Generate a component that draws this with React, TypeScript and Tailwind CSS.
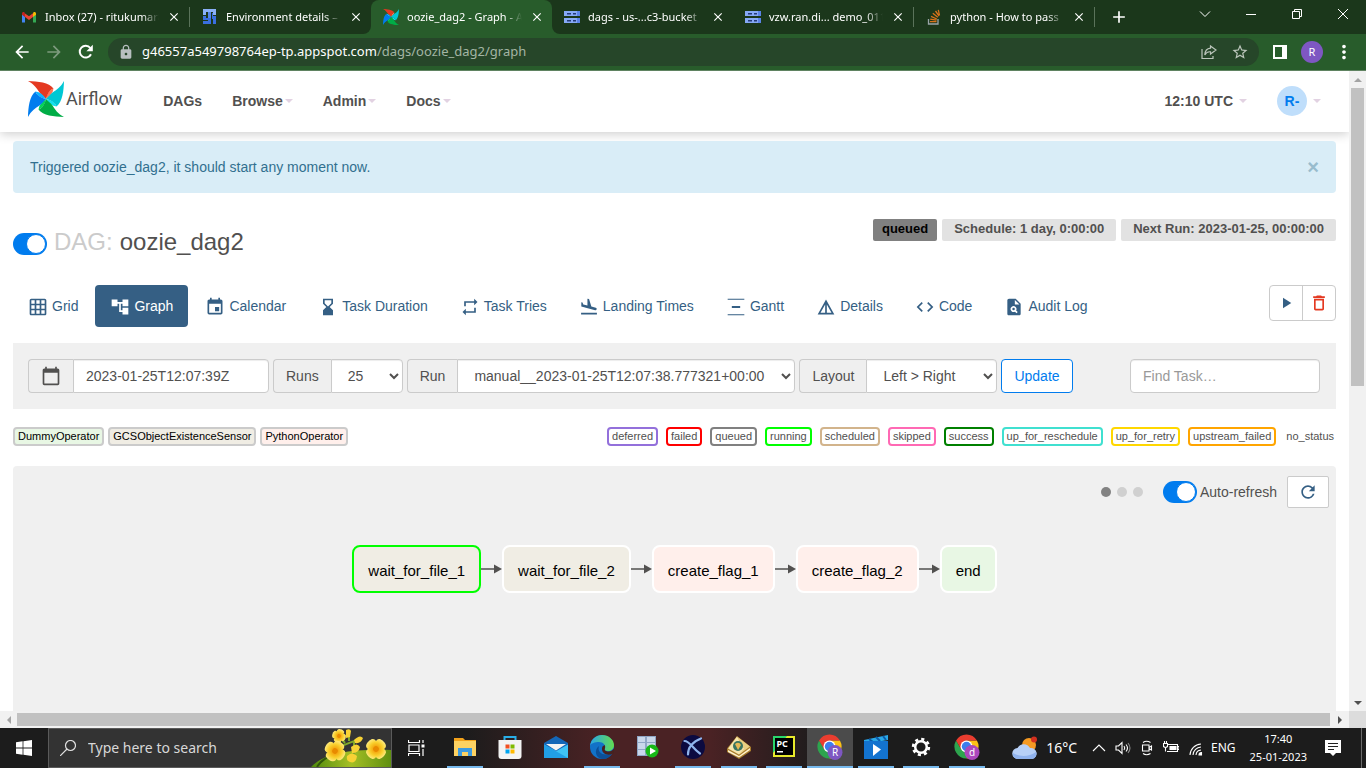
import React from "react";
import {
  MdGridOn, MdAccountTree, MdEvent, MdRepeat, MdFlightLand, MdCode, MdPlagiarism,
  MdPlayArrow, MdDeleteOutline, MdRefresh, MdCalendarToday, MdArrowBack, MdArrowForward,
  MdLock, MdStarBorder, MdMoreVert, MdClose, MdAdd,
} from "react-icons/md";

type Kids = { children?: React.ReactNode };

/* ---------- shared drawings ---------- */

function Pinwheel({ className }: { className: string }) {
  const blades = [
    ["#e43921", "#ff7557", 0],
    ["#00c7d4", "#11e1ee", 90],
    ["#00ad46", "#04d659", 180],
    ["#017cee", "#0cb6ff", 270],
  ] as const;
  return (
    <svg viewBox="0 0 36 36" className={className} aria-hidden="true">
      {blades.map(([dark, light, angle]) => (
        <g key={angle} transform={`rotate(${angle} 18 18)`}>
          <path d="M18 18C19 13 21 9 25.500 7.500C25 12 22.500 15 18 18Z" fill={light} />
          <path d="M0 0C10 .3 21 1.500 25.500 7.500C22 8.500 19.500 12.500 18 18C15 15 13.500 14 11.500 11.500C9 7.500 6 3 0 0Z" fill={dark} />
        </g>
      ))}
    </svg>
  );
}

function GmailIcon() {
  return (
    <svg viewBox="0 0 16 16" className="size-4 shrink-0" aria-hidden="true">
      <path d="M1 5v8.500h3V7.500z" fill="#4285f4" />
      <path d="M15 5v8.500h-3V7.500z" fill="#34a853" />
      <path d="M12 4.500V8l3-2.300V4.500c0-1.500-1.500-2-2.500-1.300z" fill="#fbbc04" />
      <path d="M4 4.500V8l4 3 4-3V4.300L8 7.300z" fill="#ea4335" />
      <path d="M1 4.500v1.200L4 8V4.500L3.400 3.200C2.300 2.500 1 3.100 1 4.500z" fill="#c5221f" />
    </svg>
  );
}

function ComposerIcon() {
  return (
    <svg viewBox="0 0 16 16" className="size-4 shrink-0" aria-hidden="true">
      <path d="M1 0h13v6h-3V3H9v5H6V3H4v3H1z" fill="#8ab0f8" />
      <path d="M1 7h3v2h5v6H1v-3h5v-1H1zM10 4h1v3h3v8h-3v-5h-1z" fill="#3a6fe0" />
      <path d="M6 3h3v6H6z" fill="#5585ea" />
    </svg>
  );
}

function BucketIcon() {
  return (
    <svg viewBox="0 0 16 16" className="size-4 shrink-0" aria-hidden="true">
      <path d="M0 2h16v5H0zM0 9h16v5H0z" fill="#86a9f5" />
      <path d="M13 2h3v5h-3zM13 9h3v5h-3z" fill="#5b84e8" />
      <path d="M3 4h4v1.500H3zM9 4h3v1.500H9zM3 11h4v1.500H3zM9 11h3v1.500H9z" fill="#233a78" />
    </svg>
  );
}

function StackIcon() {
  return (
    <svg viewBox="0 0 16 16" className="size-4 shrink-0" fill="none" aria-hidden="true">
      <path d="M2.500 10v5h9.500v-5" stroke="#9aa5a8" strokeWidth="1.300" />
      <path d="M4 12.700h6.500M4.200 10.200l6.300 1M5 7.300l5.800 2.700M6.800 4.300l5 4M9.500 2l3.600 5M12.300.8l1.200 5.500" stroke="#d9731b" strokeWidth="1.300" />
    </svg>
  );
}

function ReloadArrow() {
  return (
    <svg viewBox="0 0 16 16" className="size-4" aria-hidden="true">
      <path d="M13 10.200A5.900 5.900 0 1 1 12.300 4" fill="none" stroke="#fff" strokeWidth="2" />
      <path d="M14.800.8v6.400H8.400z" fill="#fff" />
    </svg>
  );
}

function Caret() {
  return <span className="h-0 w-0 border-x-4 border-t-4 border-x-transparent border-t-[#e2d2e2]" />;
}

/* ---------- browser window ---------- */

const browserTabs = [
  { title: "Inbox (27) - ritukumar8", icon: <GmailIcon /> },
  { title: "Environment details – C", icon: <ComposerIcon /> },
  { title: "oozie_dag2 - Graph - A", icon: <Pinwheel className="size-4 shrink-0" />, active: true },
  { title: "dags - us-...c3-bucket", icon: <BucketIcon /> },
  { title: "vzw.ran.di... demo_011", icon: <BucketIcon /> },
  { title: "python - How to pass", icon: <StackIcon /> },
];

function TabStrip() {
  return (
    <div className="flex h-[34px] bg-[#285c2b]">
      <div className="w-[9px] bg-[#1b371b]" />
      {browserTabs.map((tab, i) => {
        const corner = i === 1 ? "rounded-br-lg" : i === 3 ? "rounded-bl-lg" : "";
        const line = i === 0 || i === 4 || i === 5;
        return (
          <div key={tab.title} className={`min-w-0 max-w-[181px] flex-1 bg-[#1b371b] ${corner}`}>
            <div className={`flex h-full items-center ${tab.active ? "rounded-t-lg bg-[#285c2b]" : ""}`}>
              <div className="flex min-w-0 flex-1 items-center gap-2 pr-2 pl-3">
                {tab.icon}
                <span className="min-w-0 flex-1 overflow-hidden text-[11px] whitespace-nowrap text-white [mask-image:linear-gradient(to_right,black_85%,transparent)]">
                  {tab.title}
                </span>
                <button aria-label={`Close ${tab.title}`} className="text-white">
                  <MdClose className="size-3.5" />
                </button>
              </div>
              {line && <div className="h-5 w-px bg-[#5a735a]" />}
            </div>
          </div>
        );
      })}
      <div className="flex flex-1 items-center justify-between bg-[#1b371b]">
        <button aria-label="New tab" className="ml-3.5 text-white"><MdAdd className="size-5" /></button>
        <div className="flex pb-1.5">
          <WinButton label="Search tabs"><path d="M1 3.500l5 5 5-5" /></WinButton>
          <WinButton label="Minimize"><path d="M1 6.500h10" /></WinButton>
          <WinButton label="Restore"><path d="M1.500 3.500h7v7h-7zM3.500 3.500v-2h7v7h-2" /></WinButton>
          <WinButton label="Close window"><path d="M1 1l10 10M11 1L1 11" /></WinButton>
        </div>
      </div>
    </div>
  );
}

function WinButton({ label, children }: Kids & { label: string }) {
  return (
    <button aria-label={label} className="flex h-7 w-[46px] items-center justify-center">
      <svg viewBox="0 0 12 12" className="size-3" fill="none" stroke="#fff" strokeWidth="1">{children}</svg>
    </button>
  );
}

function Toolbar() {
  return (
    <div className="flex items-center border-b border-[#5f8361] bg-[#285c2b] py-1 pr-[11px] pl-3">
      <button aria-label="Back" className="mr-3 text-white"><MdArrowBack className="size-5" /></button>
      <button aria-label="Forward" className="mr-3.5 text-[#7d9a7e]"><MdArrowForward className="size-5" /></button>
      <button aria-label="Reload" className="mr-3.5"><ReloadArrow /></button>
      <div className="flex h-7 flex-1 items-center rounded-full bg-[#264629] pr-2.5 pl-2.5 text-[13px]">
        <MdLock className="mr-2 size-4 text-[#b8bfc0]" />
        <span className="text-white">g46557a549798764ep-tp.appspot.com</span>
        <span className="flex-1 text-[#a3b5a4]">/dags/oozie_dag2/graph</span>
        <button aria-label="Share" className="mr-3.5">
          <svg viewBox="0 0 16 16" className="size-4" fill="none" stroke="#bcc6bc" strokeWidth="1.200">
            <path d="M1 5v9.500h11V12M9.500 2l5.500 4-5.500 4V7.800C6.500 7.500 5 8.500 3.800 11 4 7 6 4.500 9.500 4.200z" />
          </svg>
        </button>
        <button aria-label="Bookmark" className="text-[#bcc6bc]"><MdStarBorder className="size-[18px]" /></button>
      </div>
      <button aria-label="Side panel" className="ml-3.5">
        <svg viewBox="0 0 14 14" className="size-3.5"><path fillRule="evenodd" d="M0 0h14v14H0zM2 2v10h7V2z" fill="#fff" /></svg>
      </button>
      <button aria-label="Profile" className="mr-2.5 ml-3.5 flex size-[22px] items-center justify-center rounded-full bg-[#7e57c2] text-[11px] text-white">R</button>
      <button aria-label="Menu" className="text-white"><MdMoreVert className="size-[22px]" /></button>
    </div>
  );
}

/* ---------- Airflow page ---------- */

function NavBar() {
  return (
    <nav className="flex h-[61px] shrink-0 items-center pr-7 pb-0.5 pl-7 text-sm font-bold text-[#51504f] shadow-[0_2px_10px_rgba(0,0,0,0.2)]">
      <a href="#home" className="mr-[26px] flex items-center gap-0.5 pb-1">
        <Pinwheel className="size-9" />
        <span className="font-[Roboto,sans-serif] text-[18px] font-normal">Airflow</span>
      </a>
      <a href="#dags" className="px-[15px]">DAGs</a>
      {["Browse", "Admin", "Docs"].map((item) => (
        <a key={item} href={`#${item}`} className="flex items-center gap-0.5 px-[15px]">{item}<Caret /></a>
      ))}
      <div className="flex-1" />
      <button className="mr-[30px] flex items-center gap-1.5 font-bold">12:10 UTC<Caret /></button>
      <button className="flex items-center gap-1.5 font-bold">
        <span className="flex size-[30px] items-center justify-center rounded-full bg-[#bfdefb] text-[#017cee]">R-</span>
        <Caret />
      </button>
    </nav>
  );
}

function Toggle({ id, label }: { id: string; label?: string }) {
  return (
    <input
      id={id}
      type="checkbox"
      defaultChecked
      aria-label={label}
      className="flex h-[22px] w-[34px] appearance-none items-center justify-end rounded-full bg-[#017cee] pr-px before:block before:size-5 before:rounded-full before:border before:border-[#017cee] before:bg-white"
    />
  );
}

function DagHeading() {
  return (
    <div className="mt-[26px] flex items-start justify-between">
      <div className="flex items-center gap-[7px] pt-[9px]">
        <div className="pt-1"><Toggle id="dag-paused" label="Pause or unpause DAG" /></div>
        <h3 className="flex gap-[7px] text-2xl leading-7 text-[#51504f]"><span className="text-[#cbcbcb]">DAG:</span><span>oozie_dag2</span></h3>
      </div>
      <div className="flex gap-[5px] text-[13px] leading-5 font-bold text-[#51504f]">
        <span className="rounded-xs bg-[#808080] px-[9px] pb-0.5 text-black">queued</span>
        <span className="rounded-xs bg-[#e2e2e2] px-3 pb-0.5">Schedule: 1 day, 0:00:00</span>
        <span className="rounded-xs bg-[#e2e2e2] px-3 pb-0.5">Next Run: 2023-01-25, 00:00:00</span>
      </div>
    </div>
  );
}

function Glyph({ d }: { d: string }) {
  return <svg viewBox="0 0 24 24" className="size-5" fill="currentColor" aria-hidden="true"><path d={d} /></svg>;
}

const views = [
  { name: "Grid", icon: <MdGridOn className="size-5" /> },
  { name: "Graph", icon: <MdAccountTree className="size-5" />, active: true },
  { name: "Calendar", icon: <MdEvent className="size-5" /> },
  { name: "Task Duration", icon: <Glyph d="M18 22l-.01-6L14 12l3.990-4.010L18 2H6v6l4 4-4 3.990V22h12zM8 7.500V4h8v3.500l-4 4-4-4z" /> },
  { name: "Task Tries", icon: <MdRepeat className="size-5" /> },
  { name: "Landing Times", icon: <MdFlightLand className="size-5" /> },
  { name: "Gantt", icon: <Glyph d="M22 2v1.400H2V2zM7 10.800v2.400h10v-2.400zM2 20.600v1.400h20v-1.400z" /> },
  { name: "Details", icon: <Glyph d="M12 3L2 21h20L12 3zm1 5.920L18.600 19H13V8.920zm-2 0V19H5.400L11 8.920z" /> },
  { name: "Code", icon: <MdCode className="size-5" /> },
  { name: "Audit Log", icon: <MdPlagiarism className="size-5" /> },
];

function ViewTabs() {
  return (
    <div className="mt-[29px] flex items-start justify-between">
      <div className="flex gap-0.5 text-sm text-[#355f84]">
        {views.map((v) => (
          <a
            key={v.name}
            href={`#${v.name}`}
            className={`flex h-[42px] items-center gap-1 rounded-sm px-[15px] pb-px ${v.active ? "bg-[#355f84] text-white" : ""}`}
          >
            <span className="pt-0.5">{v.icon}</span>
            {v.name}
          </a>
        ))}
      </div>
      <div className="flex h-9 divide-x divide-[#cbcbcb] rounded-sm border border-[#cbcbcb]">
        <button aria-label="Trigger DAG" className="px-[7px] text-[#355f84]"><MdPlayArrow className="size-[18px]" /></button>
        <button aria-label="Delete DAG" className="px-[6px] text-[#e43921]"><MdDeleteOutline className="size-5" /></button>
      </div>
    </div>
  );
}

function Addon({ htmlFor, children }: Kids & { htmlFor: string }) {
  return (
    <label htmlFor={htmlFor} className="flex items-center rounded-l-sm border border-r-0 border-[#cbcbcb] bg-[#efefef] px-3">
      {children}
    </label>
  );
}

const field = "h-[34px] border border-[#cbcbcb] bg-white px-3 text-sm text-[#51504f] shadow-[inset_0_1px_1px_rgba(0,0,0,0.075)]";

function FilterBar() {
  return (
    <form className="mt-4 flex items-center justify-between bg-[#f0f0f0] py-4 pr-4 pl-[15px] text-sm text-[#51504f]" onSubmit={(e) => e.preventDefault()}>
      <div className="flex gap-1">
        <div className="flex">
          <Addon htmlFor="base-date"><MdCalendarToday className="size-5" aria-label="Base date" /></Addon>
          <input id="base-date" defaultValue="2023-01-25T12:07:39Z" className={`${field} w-[196px] rounded-r-sm`} />
        </div>
        <div className="flex">
          <Addon htmlFor="runs">Runs</Addon>
          <select id="runs" className={`${field} w-[72px] rounded-r-sm`}><option>25</option></select>
        </div>
        <div className="flex">
          <Addon htmlFor="run">Run</Addon>
          <select id="run" className={`${field} w-[338px] rounded-r-sm`}><option>manual__2023-01-25T12:07:38.777321+00:00</option></select>
        </div>
        <div className="flex">
          <Addon htmlFor="layout">Layout</Addon>
          <select id="layout" className={`${field} w-[131px] rounded-r-sm`}><option>Left &gt; Right</option></select>
        </div>
        <button className="rounded-sm border border-[#017cee] bg-white px-3 text-[#017cee]">Update</button>
      </div>
      <input aria-label="Find task" placeholder="Find Task…" className={`${field} w-[190px] rounded-sm placeholder:text-[#999]`} />
    </form>
  );
}

const operators = [
  ["DummyOperator", "bg-[#e8f7e4]"],
  ["GCSObjectExistenceSensor", "bg-[#f0ede4]"],
  ["PythonOperator", "bg-[#ffefeb]"],
];

const states = [
  ["deferred", "border-2 border-[#9370db] px-[3px]"],
  ["failed", "border-2 border-[#ff0000] px-[3px]"],
  ["queued", "border-2 border-[#808080] px-[3px]"],
  ["running", "border-2 border-[#00ff00] px-[3px]"],
  ["scheduled", "border-2 border-[#d2b48c] px-[3px]"],
  ["skipped", "border-2 border-[#ff69b4] px-[3px]"],
  ["success", "border-2 border-[#008000] px-[3px]"],
  ["up_for_reschedule", "border-2 border-[#40e0d0] px-[3px]"],
  ["up_for_retry", "border-2 border-[#ffd700] px-[3px]"],
  ["upstream_failed", "border-2 border-[#ffa500] px-[3px]"],
  ["no_status", "px-0.5 py-0.5"],
];

function Legend() {
  return (
    <div className="mt-[18px] flex justify-between text-[11px] leading-[15px]">
      <div className="flex gap-1 text-black">
        {operators.map(([name, tone]) => (
          <span key={name} className={`rounded-sm border-2 border-[#cbcbcb] px-[3px] ${tone}`}>{name}</span>
        ))}
      </div>
      <div className="flex gap-2 text-[#51504f]">
        {states.map(([name, tone]) => (
          <span key={name} className={`rounded-sm ${tone}`}>{name}</span>
        ))}
      </div>
    </div>
  );
}

const nodes = [
  ["wait_for_file_1", "border-[#00ff00] bg-[#f0ede4]"],
  ["wait_for_file_2", "border-white bg-[#f0ede4]"],
  ["create_flag_1", "border-white bg-[#ffefeb]"],
  ["create_flag_2", "border-white bg-[#ffefeb]"],
  ["end", "border-white bg-[#e8f7e4]"],
];

function GraphPanel() {
  return (
    <section className="mt-5 flex-1 rounded-t-sm bg-[#f0f0f0] text-[#51504f]">
      <div className="flex items-center justify-end pt-2.5 pr-[7px] text-sm">
        <div className="mr-5 flex gap-1.5">
          <i className="size-2.5 rounded-full bg-[#828282]" />
          <i className="size-2.5 rounded-full bg-[#d0d0d0]" />
          <i className="size-2.5 rounded-full bg-[#d0d0d0]" />
        </div>
        <Toggle id="auto-refresh" />
        <label htmlFor="auto-refresh" className="mr-2.5 ml-[3px]">Auto-refresh</label>
        <button aria-label="Refresh" className="flex h-8 w-[42px] items-center justify-center rounded-xs border border-[#cbcbcb] bg-white text-[#355f84]">
          <MdRefresh className="size-5" />
        </button>
      </div>
      <div className="mt-[37px] flex items-center justify-center">
        {nodes.map(([name, tone], i) => (
          <React.Fragment key={name}>
            {i > 0 && (
              <svg viewBox="0 0 21 10" className="h-2.5 w-[21px]" aria-hidden="true">
                <path d="M0 5h15" stroke="#51504f" strokeWidth="1.500" />
                <path d="M13 .5L21 5l-8 4.500z" fill="#51504f" />
              </svg>
            )}
            <div className={`flex h-12 items-center rounded-lg border-2 px-3.5 pt-1 text-[15px] text-black ${tone}`}>{name}</div>
          </React.Fragment>
        ))}
      </div>
    </section>
  );
}

function VerticalScrollbar() {
  return (
    <div className="flex w-[17px] flex-col items-center bg-[#f1f1f1]" aria-hidden="true">
      <div className="flex h-[17px] items-center"><i className="border-x-4 border-b-4 border-x-transparent border-b-[#a3a3a3]" /></div>
      <div className="w-[13px] flex-[298] bg-[#c1c1c1]" />
      <div className="flex-[308]" />
      <div className="flex h-[17px] items-center"><i className="border-x-4 border-t-4 border-x-transparent border-t-[#505050]" /></div>
    </div>
  );
}

function HorizontalScrollbar() {
  return (
    <div className="flex h-[17px] items-center bg-[#f1f1f1]" aria-hidden="true">
      <div className="flex w-[17px] justify-center"><i className="border-y-4 border-r-4 border-y-transparent border-r-[#a3a3a3]" /></div>
      <div className="h-[13px] flex-1 bg-[#c1c1c1]" />
      <div className="flex w-[19px] justify-center"><i className="border-y-4 border-l-4 border-y-transparent border-l-[#505050]" /></div>
      <div className="h-full w-[17px] bg-[#dcdcdc]" />
    </div>
  );
}

/* ---------- Windows taskbar ---------- */

function Bloom({ x, y, r, turn }: { x: number; y: number; r: number; turn: number }) {
  return (
    <g transform={`translate(${x} ${y}) rotate(${turn}) scale(${r})`}>
      {[0, 90, 180, 270].map((a) => (
        <path key={a} d="M0 .1C-.5-.2-.75-.7-.45-.95C-.2-1.1.2-1.1.45-.95C.75-.7.5-.2 0 .1Z" transform={`rotate(${a})`} fill="url(#petal)" />
      ))}
      <circle r=".28" fill="#e88a00" />
    </g>
  );
}

function Flowers() {
  return (
    <svg viewBox="0 0 80 38" className="h-[38px] w-20" aria-hidden="true">
      <defs>
        <linearGradient id="leaf" x1="0" x2="1"><stop stopColor="#4f8a0c" /><stop offset=".5" stopColor="#a5bf25" /><stop offset="1" stopColor="#5f8f10" /></linearGradient>
        <radialGradient id="petal" gradientUnits="userSpaceOnUse" cx="0" cy="0" r="1.100"><stop offset=".2" stopColor="#f3a10c" /><stop offset=".6" stopColor="#f9cf2c" /><stop offset="1" stopColor="#ffec85" /></radialGradient>
      </defs>
      <path d="M0 38C14 24 38 20 80 21V38z" fill="url(#leaf)" />
      <path d="M6 38C11 30 17 28 22 26" stroke="#31560a" strokeWidth="2" fill="none" />
      <path d="M27 19C35 14 44 13 49 9M38 12V7M43 13v13M34 14l-5-6" stroke="#7fa82a" strokeWidth="2" fill="none" />
      <path d="M35 1q4-2 5 1l-1 6-4 1zM43 11q6-6 9-2-2 6-8 5zM40 18q6-5 9 0-1 6-8 6zM36 27q5-5 10 0-1 8-7 6-4-1-3-6z" fill="#f7d235" />
      <Bloom x={28} y={7} r={6.5} turn={20} />
      <Bloom x={24} y={22} r={10} turn={35} />
      <Bloom x={65} y={20} r={10} turn={45} />
    </svg>
  );
}

function App24({ children }: Kids) {
  return <svg viewBox="0 0 24 24" className="size-6" aria-hidden="true">{children}</svg>;
}

function Chrome({ letter, tone }: { letter: string; tone: string }) {
  return (
    <svg viewBox="0 0 26 26" className="size-[26px]" aria-hidden="true">
      <path d="M12.500 12.500V6.500H22.900A12 12 0 0 1 12.500 24.500z" fill="#fbc116" />
      <path d="M12.500 12.500L7.300 15.500 2.100 6.500A12 12 0 0 0 12.500 24.500L17 15.500z" fill="#2da44e" />
      <path d="M2.100 6.500A12 12 0 0 1 22.900 6.500H12.500L7.300 15.500z" fill="#ea3d2f" />
      <circle cx="12.500" cy="12.500" r="6" fill="#fff" />
      <circle cx="12.500" cy="12.500" r="4.700" fill="#3b7ded" />
      <circle cx="18" cy="18.500" r="7.500" fill={tone} />
      <text x="18" y="22" textAnchor="middle" fontSize="10" fill="#fff">{letter}</text>
    </svg>
  );
}

const apps: { name: string; open?: boolean; active?: boolean; icon: React.ReactNode }[] = [
  { name: "File Explorer", open: true, icon: (
    <App24><path d="M1 3h9l2 2h11v16H1z" fill="#f2a21b" /><path d="M1 6h22v15H1z" fill="#fdd262" /><path d="M5 21v-8h14v8h-4v-4H9v4z" fill="#3d9be0" /></App24>
  ) },
  { name: "Microsoft Store", icon: (
    <App24><path d="M6.500 6V2h11v4" fill="none" stroke="#29aee8" strokeWidth="2" /><path d="M.5 5h23v16q0 3-3 3H3.500q-3 0-3-3z" fill="#f3f3f3" /><path d="M7.500 9.500h4v4h-4z" fill="#f25022" /><path d="M12.500 9.500h4v4h-4z" fill="#7fba00" /><path d="M7.500 14.500h4v4h-4z" fill="#00a4ef" /><path d="M12.500 14.500h4v4h-4z" fill="#ffb900" /></App24>
  ) },
  { name: "Mail", icon: (
    <App24><path d="M0 8L12 1l12 7v14H0z" fill="#1467b8" /><path d="M0 9.500l12 6.500-12 7z" fill="#35b2ee" /><path d="M24 9.500V23H0z" fill="#3fc3f5" /><path d="M0 9.500L24 23H0z" fill="#219fe6" /><path d="M2 9h20l-10 6.500z" fill="#f4f4f4" /></App24>
  ) },
  { name: "Edge", open: true, icon: (
    <App24>
      <defs><linearGradient id="edge" x1="0" x2="1"><stop stopColor="#2aa6e8" /><stop offset="1" stopColor="#62dc50" /></linearGradient></defs>
      <circle cx="12" cy="12" r="12" fill="#1272c8" />
      <path d="M0 11C1 4 6 0 12 0c7 0 12 5 12 10 0 4-3 6-6 6-3 0-4-1-3-3 1-3-2-6-6-6C5 7 1 8 0 11z" fill="url(#edge)" />
      <path d="M9 11c-2 6 3 10 11 8 2-.5 2 .5 1 1.500-3 3-6 3.500-9 3.500C5 23 4 14 9 11z" fill="#0c4f98" />
      <path d="M14.500 10c2 3-1.500 4.500 1.500 6 3 1.200 6 .5 8-2.500l.5 4.500-4 1.500c-6 1-10-3-8-8z" fill="#47211f" />
    </App24>
  ) },
  { name: "Database Runner", icon: (
    <App24><path d="M2 1h19v20H2z" fill="#8fa6c5" /><path d="M3 2h7v5H3zM12 2h8v5h-8zM3 8h7v6H3zM12 8h8v6h-8zM3 15h7v5H3z" fill="#c9d7ea" /><circle cx="17" cy="16" r="6.500" fill="#17b817" /><path d="M15 12.500l6 3.500-6 3.500z" fill="#fff" /></App24>
  ) },
  { name: "X Client", open: true, icon: (
    <App24><circle cx="12" cy="12" r="12" fill="#0b0a40" /><path d="M3.500 6C9 6 11 13 19 18.500M20 3.500C11 7 7 12 7 19.500" fill="none" stroke="#8fb4ec" strokeWidth="2.200" strokeLinecap="round" /></App24>
  ) },
  { name: "SQL Viewer", open: true, icon: (
    <App24><path d="M0 13.500L10 1l14 11v4l-12 8L0 17z" fill="#a87d2c" /><path d="M1 13.500L10 1.500l8 13-6 5z" fill="#f7e6ae" /><path d="M10 1.500l13 10-11 8 5-6z" fill="#e9cf83" /><path d="M1 15l11 6 11-8v2l-11 7.500L1 17z" fill="#fff2ce" /><circle cx="11" cy="11" r="5" fill="#3a7560" /><path d="M8 9q4-3 6 1l-3 5z" fill="#e6b955" /></App24>
  ) },
  { name: "PyCharm", open: true, icon: (
    <App24><path d="M1 1h22v21H1z" fill="#e8ea2b" /><path d="M1 1h14L1 18z" fill="#29d66c" /><path d="M3 3h18v17H3z" fill="#000" /><text x="4.500" y="12" fontSize="9" fontWeight="bold" fill="#fff">PC</text><path d="M5 16h6v1.500H5z" fill="#fff" /></App24>
  ) },
  { name: "Chrome R", open: true, active: true, icon: <Chrome letter="R" tone="#7e57c2" /> },
  { name: "Movies & TV", open: true, icon: (
    <App24><path d="M0 5L24 0v5L0 9z" fill="#2ba8e6" /><path d="M5 4l4 3M12 2l4 4M19 1l3 4" stroke="#0c5ca8" strokeWidth="2" /><path d="M0 6h24v18H0z" fill="#1373cf" /><path d="M9 9l8 5.500L9 21z" fill="#fff" /></App24>
  ) },
  { name: "Settings", open: true, icon: (
    <App24><circle cx="12" cy="12" r="5.800" fill="none" stroke="#fff" strokeWidth="2.500" /><circle cx="12" cy="12" r="7.800" fill="none" stroke="#fff" strokeWidth="2.800" strokeDasharray="3.060 3.060" /></App24>
  ) },
  { name: "Chrome d", open: true, icon: <Chrome letter="d" tone="#ab47bc" /> },
];

function Tray({ children }: Kids) {
  return <svg viewBox="0 0 16 16" className="size-4" fill="none" stroke="#fff" strokeWidth="1.100" aria-hidden="true">{children}</svg>;
}

function Taskbar() {
  return (
    <footer className="flex h-10 shrink-0 items-stretch bg-[linear-gradient(to_right,#1c1c1c_34%,#4a2224_44%,#4a2224_52%,#1c1c1c_60%)] text-white">
      <button aria-label="Start" className="flex w-12 items-center justify-center">
        <svg viewBox="0 0 16 16" className="size-4" fill="#fff"><path d="M0 2.200L6.600 1.300v6.300H0zM7.400 1.200L16 0v7.600H7.400zM0 8.400h6.600v6.300L0 13.800zM7.400 8.400H16V16l-8.600-1.200z" /></svg>
      </button>
      <div className="flex w-[344px] items-center border border-[#5a5a5a] bg-[#333]">
        <svg viewBox="0 0 16 16" className="mr-3 ml-[11px] size-4" fill="none" stroke="#e0e0e0" strokeWidth="1.200" aria-hidden="true"><circle cx="10.500" cy="5.500" r="5" /><path d="M7 9L0 16" /></svg>
        <input aria-label="Search" placeholder="Type here to search" className="min-w-0 flex-1 bg-transparent text-sm placeholder:text-[#d8d8d8]" />
        <Flowers />
      </div>
      <button aria-label="Task view" className="mr-0.5 flex w-12 items-center justify-center">
        <svg viewBox="0 0 17 16" className="h-4 w-[17px]" fill="none" stroke="#fff" strokeWidth="1.200"><path d="M1 5h10v6.500H1zM.5 0v2.500h11V0M.5 16v-2.500h11V16M15 0v3M15 9v7" /><path d="M13.500 4.500h3v3h-3z" fill="#fff" stroke="none" /></svg>
      </button>
      <div className="grid w-[548px] grid-cols-12">
        {apps.map((app) => (
          <button key={app.name} aria-label={app.name} className={`flex flex-col items-center ${app.active ? "bg-[#4b4b4b]" : ""}`}>
            <span className="flex flex-1 items-center">{app.icon}</span>
            <span className={`h-0.5 ${app.open ? "bg-[#76b9ed]" : ""} ${app.active ? "w-full" : "w-9"}`} />
          </button>
        ))}
      </div>
      <div className="ml-auto flex items-center text-xs">
        <button className="mr-3.5 flex items-center gap-2 text-sm">
          <svg viewBox="0 0 26 24" className="h-6 w-[26px]" aria-hidden="true">
            <circle cx="17" cy="9" r="7" fill="#f59a23" /><circle cx="22" cy="3.500" r="3" fill="#d3301f" />
            <path d="M6 23a5.500 5.500 0 0 1-.5-11A7 7 0 0 1 18 12a5.500 5.500 0 0 1 2 11z" fill="#b7d0f7" />
            <path d="M5 23a5 5 0 0 1-4-6c6 4 16 4 23-1a5 5 0 0 1-4 7z" fill="#90b3ee" />
          </svg>
          16°C
        </button>
        <Tray><path d="M2 11l6-6 6 6" /></Tray>
        <span className="ml-2 flex items-center gap-2">
          <Tray><path d="M1 6h2.500L7 2.500v11L3.500 10H1zM9 6q1.500 2 0 4M11 4.500q3 3.500 0 7" /><path d="M13 3q4 5 0 10" stroke="#888" /></Tray>
          <Tray><path d="M3.500 5h6.500v6H3.500zM10 7.500l2.500-1.500v4L10 8.500M4 2.500q3.500-2.500 7.500 0M4 13.500q3.500 2.500 7.500 0" /></Tray>
          <Tray><path d="M5 4.500h9.500v7H4M14.500 6.500h1.500v3h-1.500M.5 3.500h4v3q-2 2-4 0zM1.500 1v2.500M3.500 1v2.500M2.500 7.500v4" /><path d="M7 6.500h6v3H7z" fill="#fff" /></Tray>
          <Tray><path d="M3 15A11.500 11.500 0 0 1 14 4M6 15a8.500 8.500 0 0 1 8-8M9 15a5.500 5.500 0 0 1 5-5" /><path d="M12 15a2.500 2.500 0 0 1 2.500-2.500V15z" fill="#fff" /></Tray>
          <span>ENG</span>
        </span>
        <span className="ml-3.5 flex flex-col items-center text-[11px] leading-[18px]"><span>17:40</span><span>25-01-2023</span></span>
        <button aria-label="Notifications" className="mr-5 ml-[18px]">
          <svg viewBox="0 0 16 16" className="size-4"><path d="M0 0h16v13h-5l-3 3-3-3H0z" fill="#fff" /><path d="M3 3.500h10M3 6.500h10M3 9.500h6" stroke="#222" strokeWidth="1.100" /></svg>
        </button>
        <div className="mr-1 h-10 w-px bg-[#6a6a6a]" />
      </div>
    </footer>
  );
}

export default function App() {
  return (
    <div className="flex h-screen flex-col overflow-hidden bg-white font-['Noto_Sans',sans-serif]">
      <TabStrip />
      <Toolbar />
      <div className="flex min-h-0 flex-1 font-['Liberation_Sans',Arial,sans-serif]">
        <main className="flex min-w-0 flex-1 flex-col overflow-hidden">
          <NavBar />
          <div className="flex flex-1 flex-col px-[13px] pt-[9px]">
            <div role="alert" className="flex h-[52px] items-center justify-between rounded-sm bg-[#d9edf7] px-[17px] text-sm text-[#31708f]">
              Triggered oozie_dag2, it should start any moment now.
              <button aria-label="Dismiss" className="text-xl leading-none font-bold text-[#98bccd]">×</button>
            </div>
            <DagHeading />
            <ViewTabs />
            <FilterBar />
            <Legend />
            <GraphPanel />
          </div>
        </main>
        <VerticalScrollbar />
      </div>
      <HorizontalScrollbar />
      <Taskbar />
    </div>
  );
}
